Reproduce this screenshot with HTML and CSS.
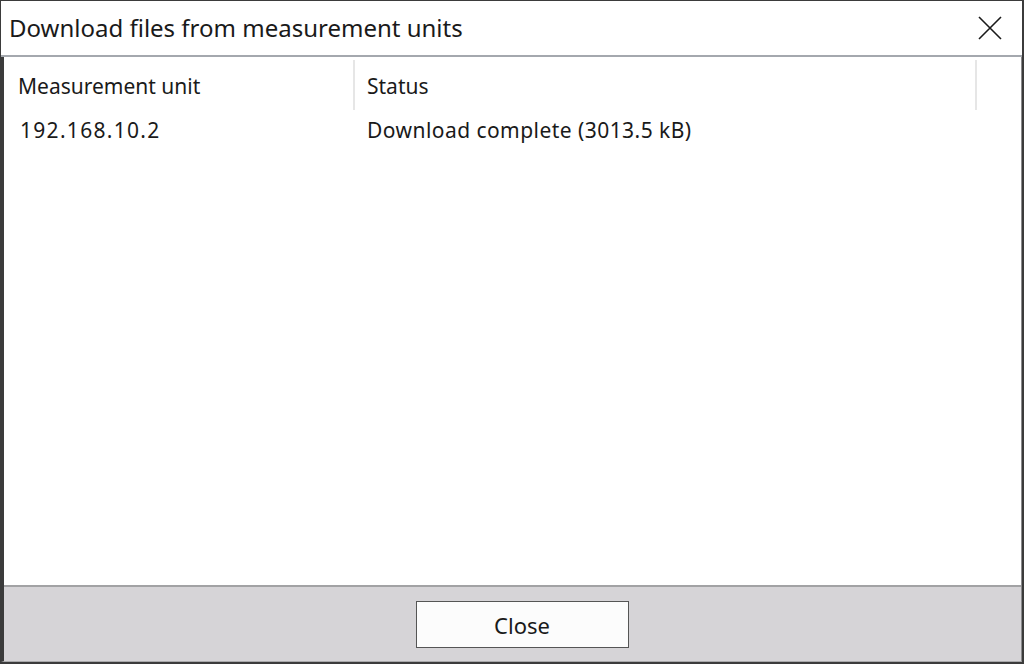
FILE: index.html
```html
<!DOCTYPE html>
<html>
<head>
<meta charset="utf-8">
<link rel="stylesheet" href="styles.css">
</head>
<body>
<div class="window">
  <div class="titlebar">
    <span class="title">Download files from measurement units</span>
    <span class="close-x">
      <svg width="24" height="24" viewBox="0 0 24 24"><path d="M1 1 L23 23 M23 1 L1 23" stroke="#1a1a1a" stroke-width="1.6" fill="none"/></svg>
    </span>
  </div>
  <div class="main">
    <div class="list">
      <div class="header">
        <div class="col col1">Measurement unit</div>
        <div class="col col2">Status</div>
        <div class="col col3"></div>
      </div>
      <div class="row">
        <div class="cell cell1">192.168.10.2</div>
        <div class="cell cell2">Download complete (3013.5 kB)</div>
      </div>
    </div>
    <div class="footer">
      <button class="btn">Close</button>
    </div>
  </div>
</div>
</body>
</html>
```

FILE: styles.css
```css
html, body {
  margin: 0;
  padding: 0;
  background: #2a2a2a;
}
.window {
  width: 1024px;
  height: 664px;
  box-sizing: border-box;
  border-top: 1px solid #3b3b3b;
  border-left: 1px solid #3b3b3b;
  border-right: 2px solid #3b3b3b;
  border-bottom: 2px solid #3b3b3b;
  display: flex;
  flex-direction: column;
  font-family: "Noto Sans", "Open Sans", sans-serif;
  color: #1a1a1a;
  background: #ffffff;
}
.titlebar {
  height: 54px;
  flex: none;
  display: flex;
  align-items: center;
  justify-content: space-between;
  padding-left: 8px;
  padding-right: 20px;
  border-bottom: 2px solid #a4a8ae;
  background: #ffffff;
}
.title {
  font-size: 24px;
  line-height: 1;
  padding-bottom: 1px;
}
.close-x {
  display: flex;
  width: 24px;
  height: 24px;
}
.main {
  flex: 1;
  display: flex;
  flex-direction: column;
  border-left: 3px solid #3b3b3b;
  border-right: 1px solid #8a8a8c;
  border-bottom: 1px solid #a8a8aa;
}
.list {
  flex: 1;
  background: #ffffff;
  padding-top: 3px;
}
.header {
  display: flex;
  height: 50px;
  align-items: center;
}
.col {
  height: 50px;
  display: flex;
  align-items: center;
  font-size: 21px;
  box-sizing: border-box;
  padding-top: 2px;
}
.col1 {
  width: 351px;
  padding-left: 14px;
  border-right: 2px solid #e6e6e6;
}
.col2 {
  width: 622px;
  padding-left: 12px;
  border-right: 2px solid #e6e6e6;
}
.col3 {
  flex: 1;
}
.row {
  display: flex;
  height: 40px;
  align-items: center;
}
.cell {
  font-size: 21px;
  box-sizing: border-box;
}
.cell1 {
  width: 351px;
  padding-left: 16px;
  letter-spacing: 1.3px;
}
.cell2 {
  padding-left: 12px;
  letter-spacing: 0.45px;
}
.footer {
  height: 76px;
  flex: none;
  background: #d6d4d7;
  border-top: 2px solid #a2a2a4;
  display: flex;
  justify-content: center;
  padding-top: 14px;
  box-sizing: border-box;
}
.btn {
  width: 213px;
  height: 47px;
  background: #fcfcfc;
  border: 1.5px solid #555555;
  border-radius: 0;
  font-family: "Noto Sans", "Open Sans", sans-serif;
  font-size: 22px;
  color: #1a1a1a;
  padding: 0;
  margin-left: 19px;
}
```
